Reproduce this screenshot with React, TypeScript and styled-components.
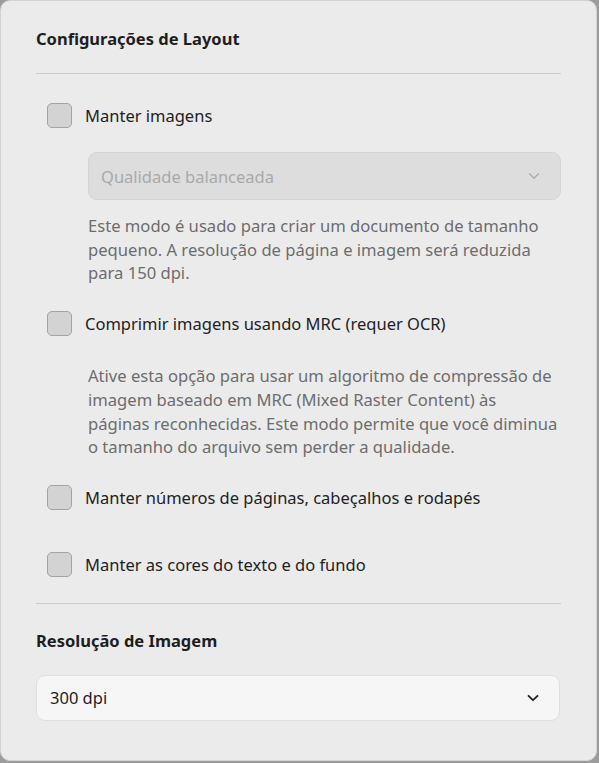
import React from "react";
import styled, { createGlobalStyle } from "styled-components";

const Global = createGlobalStyle`
  html, body { margin: 0; padding: 0; }
  body {
    background: #9c9c9c;
    font-family: "Noto Sans", "Open Sans", sans-serif;
    width: 599px;
    height: 763px;
    overflow: hidden;
  }
`;

const Panel = styled.div`
  box-sizing: border-box;
  width: 597px;
  height: 761px;
  background: #ebebeb;
  border: 1px solid #d2d2d2;
  border-radius: 10px;
  padding: 26px 36px 0 35px;
  display: flex;
  flex-direction: column;
`;

const Heading = styled.h2`
  margin: 0;
  font-size: 16.5px;
  font-weight: 700;
  color: #1e1e1e;
  line-height: 24px;
`;

const Divider = styled.div<{ $top: number; $bottom: number }>`
  height: 1px;
  background: #cdcdcd;
  width: 525px;
  flex: none;
  margin: ${(p) => `${p.$top}px 0 ${p.$bottom}px`};
`;

const Option = styled.label`
  display: flex;
  align-items: center;
  gap: 13px;
  padding-left: 11px;
  height: 30px;
  cursor: pointer;
`;

const Box = styled.span`
  box-sizing: border-box;
  width: 25px;
  height: 25px;
  border-radius: 5px;
  border: 1.5px solid #a3a3a3;
  background: #d3d3d3;
  flex: none;
`;

const Label = styled.span`
  font-size: 16.5px;
  color: #222;
`;

const Indented = styled.div`
  padding-left: 52px;
`;

const Select = styled.div<{ $disabled?: boolean }>`
  box-sizing: border-box;
  display: flex;
  align-items: center;
  justify-content: space-between;
  height: ${(p) => (p.$disabled ? 48 : 46)}px;
  padding: 0 20px 0 ${(p) => (p.$disabled ? 12 : 13)}px;
  border-radius: 9px;
  border: 1px solid ${(p) => (p.$disabled ? "#d4d4d4" : "#e0e0e0")};
  background: ${(p) => (p.$disabled ? "#dddddd" : "#f6f6f6")};
  color: ${(p) => (p.$disabled ? "#a9a9a9" : "#1e1e1e")};
  font-size: 16.5px;
  width: ${(p) => (p.$disabled ? 473 : 524)}px;
`;

const Desc = styled.p<{ $top: number; $bottom: number }>`
  margin: ${(p) => `${p.$top}px 0 ${p.$bottom}px`};
  padding-left: 52px;
  font-size: 16.6px;
  line-height: 23.7px;
  color: #6d6d6d;
  white-space: nowrap;
`;

const Spacer = styled.div<{ $h: number }>`
  height: ${(p) => p.$h}px;
  flex: none;
`;

const Chevron = ({ color, w }: { color: string; w: number }) => (
  <svg width="12" height="8" viewBox="0 0 12 8" fill="none">
    <path d="M1.5 1.8 L6 6.2 L10.5 1.8" stroke={color} strokeWidth={w} strokeLinecap="round" strokeLinejoin="round" />
  </svg>
);

export default function App() {
  return (
    <>
      <Global />
      <Panel>
        <Heading>Configurações de Layout</Heading>
        <Divider $top={22} $bottom={26} />
        <Option>
          <Box />
          <Label>Manter imagens</Label>
        </Option>
        <Spacer $h={22} />
        <Indented>
          <Select $disabled>
            <span>Qualidade balanceada</span>
            <Chevron color="#acacac" w={1.3} />
          </Select>
        </Indented>
        <Desc $top={14} $bottom={23}>
          Este modo é usado para criar um documento de tamanho
          <br />
          pequeno. A resolução de página e imagem será reduzida
          <br />
          para 150 dpi.
        </Desc>
        <Option>
          <Box />
          <Label>Comprimir imagens usando MRC (requer OCR)</Label>
        </Option>
        <Desc $top={26} $bottom={24}>
          Ative esta opção para usar um algoritmo de compressão de
          <br />
          imagem baseado em MRC (Mixed Raster Content) às
          <br />
          páginas reconhecidas. Este modo permite que você diminua
          <br />o tamanho do arquivo sem perder a qualidade.
        </Desc>
        <Option>
          <Box />
          <Label>Manter números de páginas, cabeçalhos e rodapés</Label>
        </Option>
        <Spacer $h={37} />
        <Option>
          <Box />
          <Label>Manter as cores do texto e do fundo</Label>
        </Option>
        <Divider $top={23} $bottom={25} />
        <Heading>Resolução de Imagem</Heading>
        <Spacer $h={22} />
        <Select>
          <span>300 dpi</span>
          <Chevron color="#222" w={1.8} />
        </Select>
      </Panel>
    </>
  );
}
